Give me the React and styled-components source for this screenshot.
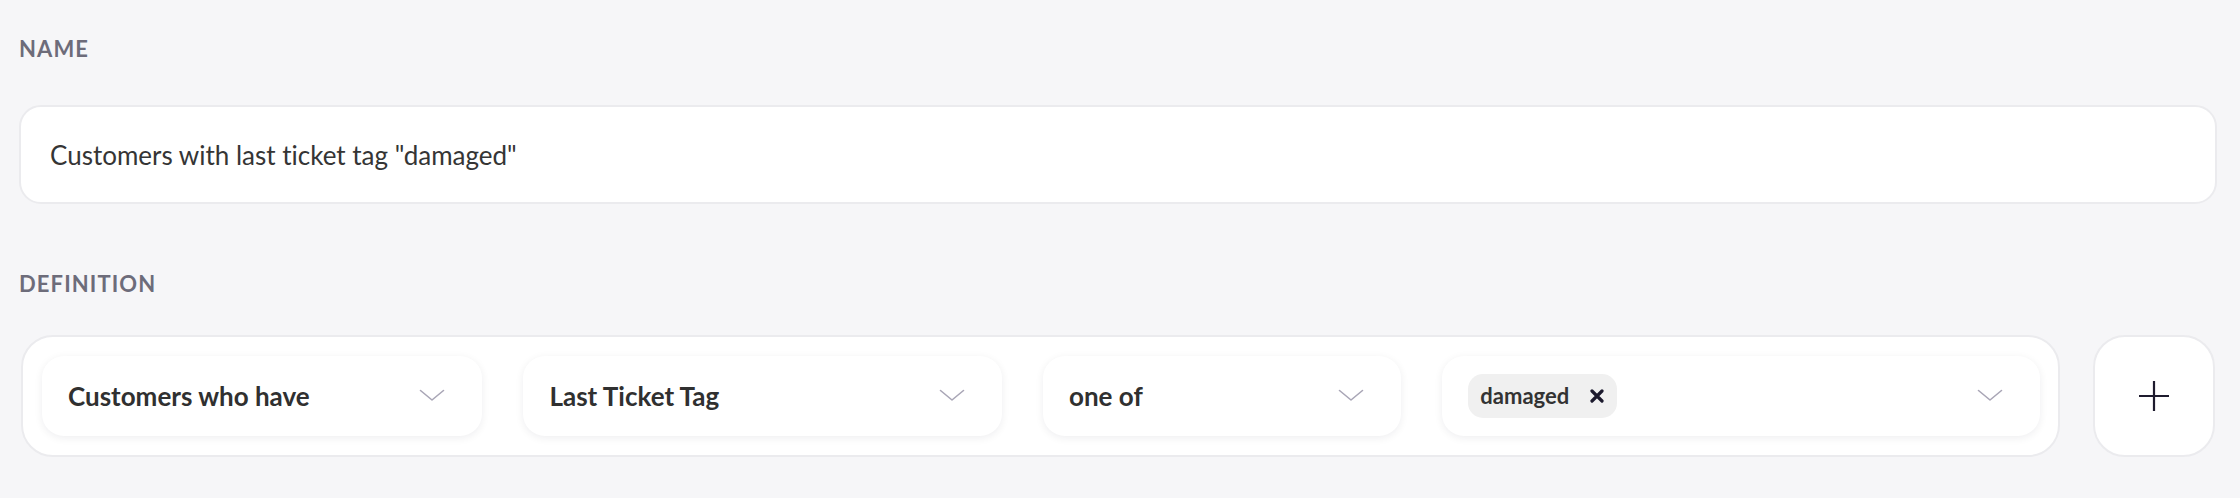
import styled, { createGlobalStyle } from 'styled-components'

const GlobalStyle = createGlobalStyle`
  body {
    margin: 0;
    background: #f6f6f8;
    font-family: Lato, 'Noto Sans', sans-serif;
    font-variant-ligatures: none;
    color: #333333;
  }
`

const conditions = ['Customers who have', 'Last Ticket Tag', 'one of']

const Chevron = () => (
  <svg width="26" height="13" viewBox="0 0 26 13" fill="none">
    <path
      d="M1.5 1.5 L13 11 L24.5 1.5"
      stroke="#a9a6b6"
      strokeWidth="1.6"
      strokeLinecap="round"
      strokeLinejoin="round"
    />
  </svg>
)

const CloseIcon = () => (
  <svg width="14" height="14" viewBox="0 0 14 14" fill="none">
    <path
      d="M2 2 L12 12 M12 2 L2 12"
      stroke="#1c1a2e"
      strokeWidth="3.2"
      strokeLinecap="round"
    />
  </svg>
)

const PlusIcon = () => (
  <svg width="32" height="32" viewBox="0 0 32 32" fill="none">
    <path d="M16 1 V31 M1 16 H31" stroke="#1e1b2e" strokeWidth="2.2" />
  </svg>
)

const App = () => {
  return (
    <>
      <GlobalStyle />
      <Page>
        <Label>Name</Label>
        <NameInput>Customers with last ticket tag "damaged"</NameInput>

        <Label $top={67}>Definition</Label>
        <DefinitionRow>
          <RuleBox>
            {conditions.map((label) => (
              <Select key={label}>
                <SelectText>{label}</SelectText>
                <Chevron />
              </Select>
            ))}
            <Select>
              <Tag>
                damaged
                <CloseIcon />
              </Tag>
              <Chevron />
            </Select>
          </RuleBox>
          <AddButton aria-label="Add condition">
            <PlusIcon />
          </AddButton>
        </DefinitionRow>
      </Page>
    </>
  )
}

const Page = styled.main`
  padding: 36px 23px 40px 19px;
`

const Label = styled.div`
  margin-top: ${({ $top }) => ($top ? `${$top}px` : 0)};
  font-size: 22px;
  line-height: 1.2;
  font-weight: 700;
  letter-spacing: 1.1px;
  text-transform: uppercase;
  color: #6d6c7a;
`

const NameInput = styled.div`
  margin-top: 43px;
  height: 95px;
  box-sizing: content-box;
  border: 2px solid #ebebee;
  border-radius: 22px;
  background: #ffffff;
  display: flex;
  align-items: center;
  padding: 0 29px;
  font-size: 26px;
  color: #353535;
`

const DefinitionRow = styled.div`
  margin: 37px 2px 0 2px;
  display: flex;
  gap: 33px;
`

const RuleBox = styled.div`
  flex: 1;
  display: grid;
  grid-template-columns: 440fr 478fr 358fr 597fr;
  gap: 41px;
  padding: 19px 18px 19px 19px;
  border: 2px solid #ebebee;
  border-radius: 32px;
  background: #ffffff;
`

const Select = styled.div`
  min-width: 0;
  height: 80px;
  display: flex;
  align-items: center;
  justify-content: space-between;
  padding: 0 37px 0 26px;
  border-radius: 22px;
  background: #ffffff;
  box-shadow: 0 2px 8px rgba(20, 20, 40, 0.07);
`

const SelectText = styled.span`
  font-size: 26px;
  font-weight: 700;
  color: #303030;
`

const Tag = styled.span`
  display: inline-flex;
  align-items: center;
  gap: 21px;
  height: 44px;
  padding: 0 13px 0 12px;
  border-radius: 15px;
  background: #f0f0f0;
  font-size: 22px;
  font-weight: 700;
  color: #333333;
`

const AddButton = styled.button`
  width: 122px;
  height: 122px;
  box-sizing: border-box;
  flex: none;
  display: flex;
  align-items: center;
  justify-content: center;
  border: 2px solid #ebebee;
  border-radius: 32px;
  background: #ffffff;
  cursor: pointer;
`

export default App
